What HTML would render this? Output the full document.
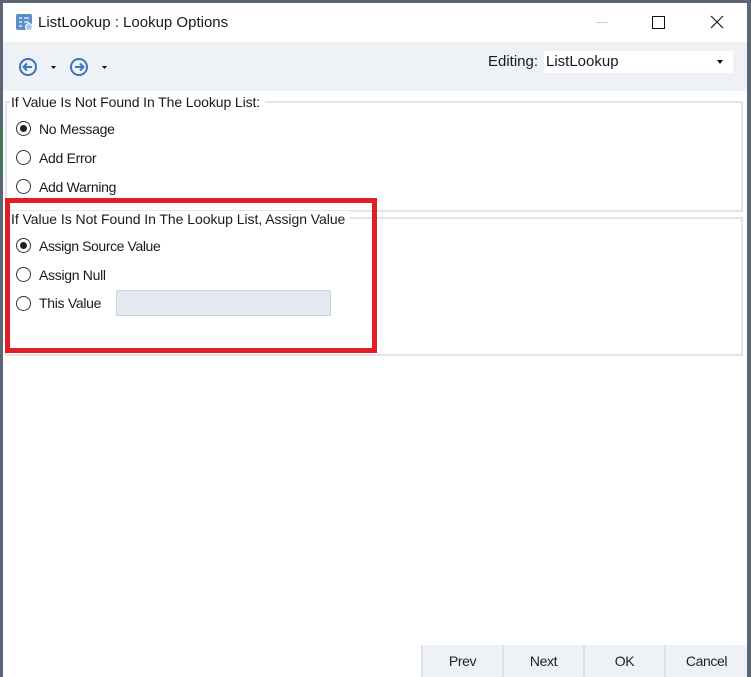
<!DOCTYPE html>
<html><head><style>
body{margin:0;width:751px;height:677px;overflow:hidden;background:#5b6573;font-family:"Liberation Sans",sans-serif;position:relative}
.win{position:absolute;left:3px;top:3px;width:744px;height:674px;background:#fff}
.ab{position:absolute}
.t{font-size:14px;color:#1a1a1a;letter-spacing:-0.3px;white-space:nowrap}
.grp{position:absolute;border:2px solid #e3e5e8}
.rad{position:absolute;width:13px;height:13px;border:1px solid #333;border-radius:50%;background:#fff}
.rad.on::after{content:"";position:absolute;left:3px;top:3px;width:7px;height:7px;border-radius:50%;background:#222}
.btn{position:absolute;top:642px;height:32px;background:#eef2f6;border-left:2px solid #dde1e6;font-size:14px;color:#222;text-align:center;line-height:32px;letter-spacing:-0.4px}
</style></head><body>
<div class="ab" style="left:0;top:125px;width:3px;height:48px;background:#3d7a55"></div>
<div class="win">
 <svg class="ab" style="left:12px;top:10px" width="20" height="20" viewBox="0 0 20 20"><rect x="1" y="1" width="16" height="16" rx="2" fill="#5b8fc9"/><path d="M4 5h3M9 5h5M4 9h3M9 9h5M4 13h3" stroke="#dce8f5" stroke-width="1.5"/><circle cx="14" cy="14" r="3.5" fill="#a9c8ea" stroke="#fff"/></svg>
 <div class="ab t" style="left:35px;top:11px;font-size:15px;letter-spacing:0">ListLookup : Lookup Options</div>
 <div class="ab" style="left:593px;top:19px;width:12px;height:1px;background:#ccc"></div>
 <div class="ab" style="left:649px;top:13px;width:11px;height:11px;border:1px solid #111"></div>
 <svg class="ab" style="left:707px;top:12px" width="14" height="14"><path d="M1 1L13 13M13 1L1 13" stroke="#111" stroke-width="1.1"/></svg>
 <div class="ab" style="left:0;top:39px;width:744px;height:49px;background:#eef2f6"></div>
 <svg class="ab" style="left:14px;top:54px" width="100" height="20"><g fill="none" stroke="#3c75b8" stroke-width="2"><circle cx="11" cy="10" r="8"/><path d="M15 10H7M10 6.5L6.5 10 10 13.5"/><circle cx="62" cy="10" r="8"/><path d="M58 10H66M63 6.5L66.5 10 63 13.5"/></g><path d="M34 9h5l-2.5 3z M85 9h5l-2.5 3z" fill="#111"/></svg>
 <div class="ab t" style="left:485px;top:50px;font-size:15px;letter-spacing:0">Editing:</div>
 <div class="ab" style="left:541px;top:48px;width:189px;height:22px;background:#fff"></div>
 <div class="ab t" style="left:543px;top:50px;font-size:15px;letter-spacing:0">ListLookup</div>
 <div class="ab" style="left:714px;top:57px;border-left:3px solid transparent;border-right:3px solid transparent;border-top:4px solid #111"></div>
 <div class="grp" style="left:2px;top:98px;width:734px;height:107px"></div>
 <div class="ab t" style="left:7px;top:91px;background:#fff;padding:0 5px 0 1px;letter-spacing:-0.1px">If Value Is Not Found In The Lookup List:</div>
 <div class="rad on" style="left:13px;top:118px"></div><div class="ab t" style="left:36px;top:118px">No Message</div>
 <div class="rad" style="left:13px;top:147px"></div><div class="ab t" style="left:36px;top:147px">Add Error</div>
 <div class="rad" style="left:13px;top:176px"></div><div class="ab t" style="left:36px;top:176px">Add Warning</div>
 <div class="grp" style="left:2px;top:214px;width:734px;height:135px"></div>
 <div class="ab t" style="left:7px;top:208px;background:#fff;padding:0 5px 0 1px;letter-spacing:-0.05px">If Value Is Not Found In The Lookup List, Assign Value</div>
 <div class="rad on" style="left:13px;top:235px"></div><div class="ab t" style="left:36px;top:235px;letter-spacing:-0.4px">Assign Source Value</div>
 <div class="rad" style="left:13px;top:264px"></div><div class="ab t" style="left:36px;top:264px">Assign Null</div>
 <div class="rad" style="left:13px;top:293px"></div><div class="ab t" style="left:36px;top:292px">This Value</div>
 <div class="ab" style="left:113px;top:287px;width:213px;height:24px;background:#e3e9f0;border:1px solid #cfd4da"></div>
 <div class="ab" style="left:2px;top:195px;width:362px;height:145px;border:5px solid #e21f26"></div>
 <div class="btn" style="left:418px;width:79px">Prev</div>
 <div class="btn" style="left:499px;width:79px">Next</div>
 <div class="btn" style="left:580px;width:79px">OK</div>
 <div class="btn" style="left:661px;width:81px">Cancel</div>
</div>
</body></html>
